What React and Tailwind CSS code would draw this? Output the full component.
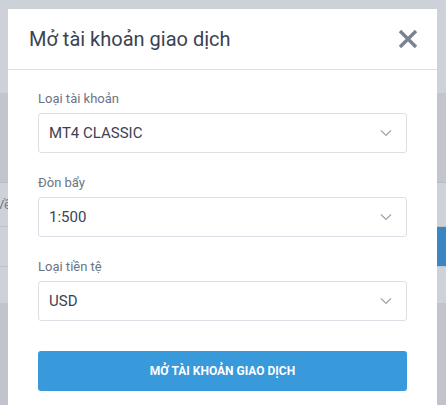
import React from 'react';

const fields = [
  { label: 'Loại tài khoản', value: 'MT4 CLASSIC' },
  { label: 'Đòn bẩy', value: '1:500' },
  { label: 'Loại tiền tệ', value: 'USD' },
];

function Chevron() {
  return (
    <svg width="12" height="8" viewBox="0 0 12 8" fill="none" className="text-[#9ca3af]">
      <path d="M1 1.5 6 6.5 11 1.5" stroke="currentColor" strokeWidth="1.2" />
    </svg>
  );
}

function SelectField({ label, value }) {
  return (
    <div className="mb-[20px]">
      <p className="text-[13px] leading-[20px] text-[#6b7384] mb-[4px]">{label}</p>
      <div className="h-[40px] flex items-center justify-between px-[10px] border border-[#dcdfe5] rounded-[3px] bg-white">
        <span className="text-[15px] text-[#3b4254]">{value}</span>
        <span className="pr-[4px]"><Chevron /></span>
      </div>
    </div>
  );
}

export default function App() {
  return (
    <div className="relative w-[446px] h-[405px] overflow-hidden bg-[#cdd1d8]" style={{ fontFamily: 'Roboto, "Noto Sans", sans-serif' }}>
      {/* page behind the dim overlay */}
      <div className="flex flex-col">
        <div className="h-[93px] bg-[#cdd1d8]" />
        <div className="h-[90px] bg-[#c2c5cc] border-b border-[#b9bcc3]" />
        <div className="h-[44px] bg-[#cdd1d8] border-b border-[#bfc2c9] flex items-center justify-between">
          <span className="text-[13px] text-[#7b808b] -ml-[4px]">Về</span>
          <span />
        </div>
        <div className="h-[40px] bg-[#cdd1d8] border-b border-[#bfc2c9] flex justify-end">
          <div className="w-[60px] h-full bg-[#3a86c3] text-white text-[12px] font-bold flex items-center pl-[2px]">KH</div>
        </div>
        <div className="h-[36px] bg-[#cdd1d8]" />
        <div className="h-[110px] bg-[#c1c4cb]" />
      </div>

      {/* modal */}
      <div className="absolute left-[8px] top-[9px] w-[429px] bg-white">
        <div className="h-[61px] flex items-center justify-between pl-[21px] pr-[19px] border-b border-[#dcdfe4]">
          <h2 className="text-[20px] text-[#3c4252]">Mở tài khoản giao dịch</h2>
          <svg width="20" height="20" viewBox="0 0 20 20" className="text-[#7b8393]">
            <path d="M2 2 18 18M18 2 2 18" stroke="currentColor" strokeWidth="3.4" />
          </svg>
        </div>
        <div className="px-[30px] pt-[19px] pb-[30px]">
          {fields.map((f) => (
            <SelectField key={f.label} label={f.label} value={f.value} />
          ))}
          <button className="mt-[10px] w-full h-[40px] rounded-[3px] bg-[#3899db] text-white text-[12px] font-bold uppercase">
            Mở tài khoản giao dịch
          </button>
        </div>
      </div>
    </div>
  );
}
